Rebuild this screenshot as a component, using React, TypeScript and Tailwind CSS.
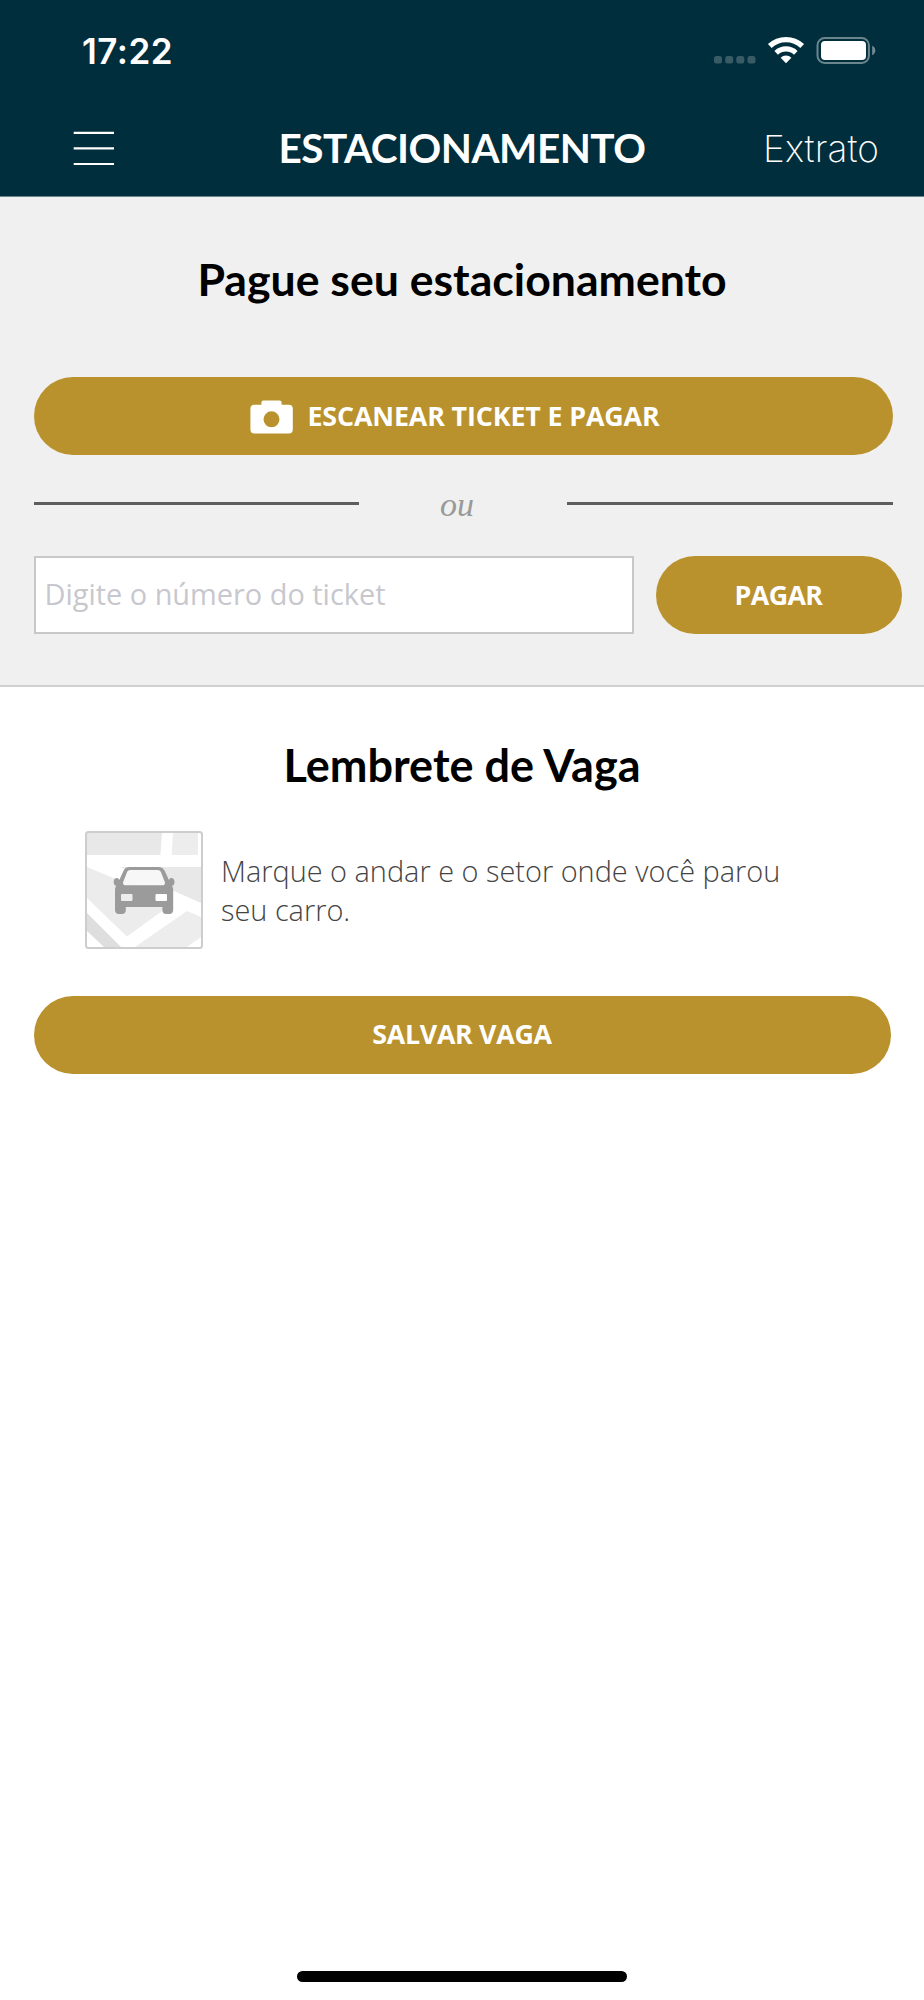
import { useState } from 'react';

function StatusBar() {
  return (
    <div className="flex h-[100px] items-center justify-between pl-[82px] pr-[47px]">
      <span className="pt-0.5 font-['Inter',sans-serif] text-[35px] leading-none font-semibold tracking-[0.5px]">
        17:22
      </span>
      <svg width="164" height="28" viewBox="0 0 164 28" fill="none">
        <g fill="#fff" fillOpacity="0.22">
          <rect x="1" y="20" width="8" height="7.5" rx="2.5" />
          <rect x="12.2" y="20" width="8" height="7.5" rx="2.5" />
          <rect x="23.3" y="20" width="8" height="7.5" rx="2.5" />
          <rect x="34.5" y="20" width="8" height="7.5" rx="2.5" />
        </g>
        <path d="M56.8 10a23.7 23.7 0 0 1 32.4 0" stroke="#fff" strokeWidth="5.4" />
        <path d="M63.2 16.8a14.4 14.4 0 0 1 19.6 0" stroke="#fff" strokeWidth="5.2" />
        <path d="M73 27.3l-5.400-5.600a7.800 7.800 0 0 1 10.800 0z" fill="#fff" />
        <rect x="104.500" y="2" width="51.400" height="25" rx="7.200" stroke="#fff" strokeOpacity="0.420" strokeWidth="2" />
        <rect x="108" y="5" width="45" height="19" rx="4" fill="#fff" />
        <path d="M159.200 9.800c1.900.8 3.100 2.600 3.100 4.700s-1.200 3.900-3.100 4.700z" fill="#fff" fillOpacity="0.450" />
      </svg>
    </div>
  );
}

function NavBar() {
  return (
    <div className="flex h-24 items-center justify-between pr-[45px] pl-[73px]">
      <button className="flex w-[129px] items-center" aria-label="Menu">
        <svg width="42" height="36" viewBox="0 0 42 36" stroke="#fff" strokeWidth="2.2">
          <path d="M.7 2.8H41M.7 18.3H41M.7 34H41" />
        </svg>
      </button>
      <h1 className="font-['Lato',sans-serif] text-[40.5px] leading-none font-bold tracking-[-0.5px] whitespace-nowrap">
        ESTACIONAMENTO
      </h1>
      <button className="w-[157px] text-right font-['Inter',sans-serif] text-[37px] leading-none font-extralight tracking-[0.1px]">
        Extrato
      </button>
    </div>
  );
}

function CameraIcon() {
  return (
    <svg width="43" height="34" viewBox="0 0 43 34" fill="#fff">
      <path
        fillRule="evenodd"
        d="M13.4.4h16.2a2 2 0 0 1 2 2v2.4h7.2a4 4 0 0 1 4 4v20.8a4 4 0 0 1-4 4H4.4a4 4 0 0 1-4-4V8.8a4 4 0 0 1 4-4h7V2.4a2 2 0 0 1 2-2zM21.5 11.3a8 8 0 1 0 0 16 8 8 0 0 0 0-16z"
      />
    </svg>
  );
}

function ParkingMapIcon() {
  return (
    <svg width="118" height="118" viewBox="0 0 118 118" className="shrink-0">
      <rect x="1" y="1" width="116" height="116" rx="2" fill="#fff" />
      <path d="M2 2h75l-1.600 22H2z" fill="#e8e8e8" />
      <path d="M88 2h25v22H86.600z" fill="#ededed" />
      <path d="M2 36l86 36-46 33.500L2 67z" fill="#ececec" />
      <path d="M35 36h81v36z" fill="#e8e8e8" />
      <path d="M2 82l34 34H19L2 100z" fill="#dedede" />
      <path d="M50 116l52-36 14 6v20l-14 10z" fill="#ededed" />
      <rect x="1" y="1" width="116" height="116" rx="2.500" fill="none" stroke="#cdcdcd" strokeWidth="2" />
      <path d="M45.500 38.500h28c2 0 3.200 1 4 2.800l4 10.200c.6 1.700-.1 2.900-1.900 2.900H39.600c-1.800 0-2.500-1.200-1.900-2.900l4-10.200c.8-1.800 1.800-2.800 3.800-2.800z" fill="#f7f7f7" />
      <path
        fill="#9b9b9b"
        fillRule="evenodd"
        d="M44.500 36h29c3 0 5.200 1.500 6.400 4.300l4 8.700c.8-1.500 1.500-2 2.500-2 1.800 0 3.100 1.600 3.100 3.800s-.8 3.900-2 3.900h-.6c.9 1.300 1.300 2.800 1.300 4.600v19.500c0 2.400-1.300 4.200-3.600 4.200h-3.400c-2.400 0-3.800-1.500-3.800-3.800V76H40.800v3.200c0 2.300-1.400 3.800-3.800 3.800h-3.400c-2.300 0-3.600-1.800-3.600-4.200V59.300c0-1.800.4-3.300 1.300-4.600h-.6c-1.200 0-2-1.700-2-3.900s1.300-3.800 3.100-3.800c1 0 1.700.5 2.500 2l4-8.700C39.300 37.500 41.500 36 44.500 36zM45.500 39c-1.700 0-2.800.7-3.600 2.400L38.200 51c-.7 2 .2 3.200 2 3.200h37.600c1.800 0 2.700-1.200 2-3.200l-3.700-9.600c-.8-1.700-1.900-2.400-3.600-2.400z"
      />
      <rect x="36" y="63" width="11.500" height="7" rx="1" fill="#ededed" />
      <rect x="70.500" y="63" width="11.500" height="7" rx="1" fill="#fff" />
    </svg>
  );
}

export default function App() {
  const [ticket, setTicket] = useState('');

  return (
    <div className="flex h-[2000px] w-[924px] flex-col overflow-hidden bg-white font-['Open_Sans',sans-serif]">
      <header className="h-[197px] shrink-0 border-b border-[#6a838c] bg-[#012e3c] text-white">
        <StatusBar />
        <NavBar />
      </header>

      <section className="h-[490px] shrink-0 border-b-2 border-[#d0d0d0] bg-[#f0f0f0] px-[33.5px] pt-[55px]">
        <h2 className="text-center font-['Lato',sans-serif] text-[44.6px] leading-[54px] font-bold text-black">
          Pague seu estacionamento
        </h2>
        <button className="mt-[71px] flex h-[78px] w-[859px] items-center justify-center gap-[14px] rounded-full bg-[#b9922d] pt-px pr-4 text-white">
          <CameraIcon />
          <span className="text-[26.8px] leading-none font-bold tracking-[-0.12px]">
            ESCANEAR TICKET E PAGAR
          </span>
        </button>

        <div className="flex h-[101px] w-[859px] items-center justify-between pb-1">
          <div className="h-[3px] w-[325px] bg-[#5c5d5f]" />
          <span className="pt-0.5 pr-[11px] font-['Liberation_Serif',serif] text-[34px] leading-none text-[#999] italic">
            ou
          </span>
          <div className="h-[3px] w-[326px] bg-[#5c5d5f]" />
        </div>

        <div className="flex gap-[22px]">
          <input
            value={ticket}
            onChange={(e) => setTicket(e.target.value)}
            placeholder="Digite o número do ticket"
            className="h-[78px] w-[600px] shrink-0 border-2 border-[#c8c8c8] bg-white pr-2 pb-[3px] pl-[9px] text-[28.9px] outline-none placeholder:text-[#c7c7cd]"
          />
          <button className="h-[78px] w-[246px] shrink-0 rounded-full bg-[#b9922d] text-[26.8px] leading-none font-bold tracking-[-0.6px] text-white">
            PAGAR
          </button>
        </div>
      </section>

      <section className="flex grow flex-col px-[33.5px] pt-[51px]">
        <h2 className="text-center font-['Lato',sans-serif] text-[45px] leading-[54px] font-bold text-black">
          Lembrete de Vaga
        </h2>
        <div className="mt-[39px] flex items-center gap-[18px] pl-[51.5px]">
          <ParkingMapIcon />
          <p className="w-[600px] text-[28.9px] leading-[39.5px] font-light text-[#444]">
            Marque o andar e o setor onde você parou seu carro.
          </p>
        </div>
        <button className="mt-[47px] h-[78px] w-[857px] shrink-0 rounded-full bg-[#b9922d] pb-px text-[26.8px] leading-none font-bold tracking-[-0.3px] text-white">
          SALVAR VAGA
        </button>
      </section>

      <div className="mx-auto mb-[18px] h-[11px] w-[330px] shrink-0 rounded-full bg-black" />
    </div>
  );
}
